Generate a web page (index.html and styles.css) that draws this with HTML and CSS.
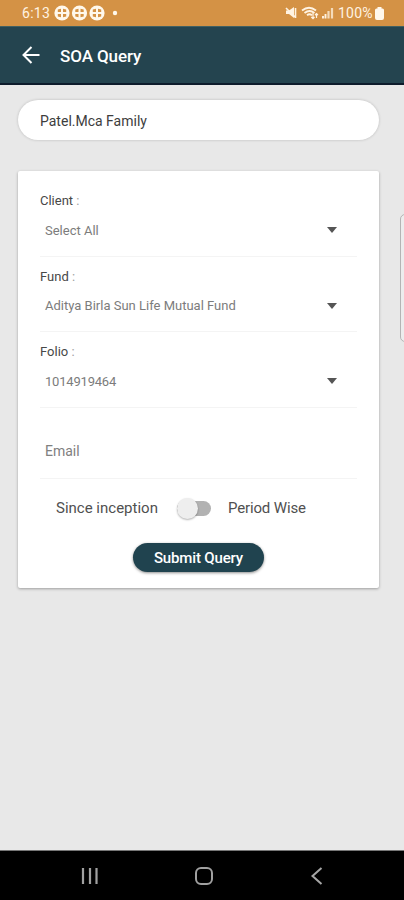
FILE: index.html
```
<!DOCTYPE html>
<html lang="en">
<head>
  <meta charset="UTF-8" />
  <meta name="viewport" content="width=device-width, initial-scale=1.0"/>
  <title>SOA Query</title>
  <link rel="stylesheet" href="styles.css">
</head>
<body>
  <div class="status-bar">
    <span class="time">6:13</span>
    <svg class="notifications" width="66" height="16" viewBox="0 0 66 16">
      <defs>
        <g id="ball">
          <circle cx="8" cy="8" r="7.6" fill="#fff8ec"/>
          <path d="M3.800 4.500L7 3.800V7H3.800zM9 3.800l3.200.7V7H9zM3.800 9H7v3.200l-3.200-.7zM9 9h3.200v2.500L9 12.200z" fill="#d49245"/>
        </g>
      </defs>
      <use href="#ball" x="0"/>
      <use href="#ball" x="17.5"/>
      <use href="#ball" x="35"/>
      <circle cx="61" cy="8" r="2.2" fill="#fff8ec"/>
    </svg>
    <svg class="signals" width="50" height="14" viewBox="0 0 50 14" fill="none" stroke="#fff3e2">
      <!-- muted speaker -->
      <path d="M1 4.500h3l5-3.500v11l-5-4H1z" fill="#fff3e2" stroke="none"/>
      <path d="M1 2l9.500 9.500M10.500 2v10" stroke-width="1.6"/>
      <!-- wifi -->
      <path d="M17 4.500q7-5.500 14 0M19.500 7q5-4 10 0M22 9.300q2.500-2 5 0" stroke-width="1.8"/>
      <path d="M28 7v5.500M26.300 11l1.700 1.700l1.500-1.700M31.500 12V7.500M30 9l1.500-1.500L33 9" stroke-width="1.2"/>
      <!-- mobile signal -->
      <path d="M38 12.500v-2.500M40.500 12.500V8" stroke-width="1.9"/>
      <path d="M43.500 12.500V5M47 12.500V2" stroke-width="2.2" opacity=".75"/>
    </svg>
    <span class="percent">100%</span>
    <svg width="9" height="13" viewBox="0 0 9 13">
      <path d="M2.500 0h4v1.500h1q1.500 0 1.500 1.500v8q0 2-2 2H2q-2 0-2-2V3q0-1.500 1.500-1.500h1z" fill="#fff8ec"/>
    </svg>
  </div>

  <div class="app-bar">
    <svg width="18" height="18" viewBox="0 0 18 18" fill="none" stroke="#fff" stroke-width="2">
      <path d="M17.500 9H2M9.500 1L1.500 9l8 8"/>
    </svg>
    <h1>SOA Query</h1>
  </div>

  <div class="content">
    <div class="family">Patel.Mca Family</div>

    <div class="card">
      <div class="field">
        <label>Client<span> :</span></label>
        <div class="select"><span>Select All</span><i class="caret"></i></div>
      </div>
      <div class="field">
        <label>Fund<span> :</span></label>
        <div class="select"><span>Aditya Birla Sun Life Mutual Fund</span><i class="caret"></i></div>
      </div>
      <div class="field">
        <label>Folio<span> :</span></label>
        <div class="select"><span class="folio-value">1014919464</span><i class="caret"></i></div>
      </div>
      <div class="email">Email</div>

      <div class="period">
        <span class="since">Since inception</span>
        <div class="switch"><div class="knob"></div></div>
        <span class="wise">Period Wise</span>
      </div>

      <button class="submit">Submit Query</button>
    </div>
  </div>

  <div class="edge-handle"></div>

  <div class="nav-bar">
    <svg width="18" height="18" viewBox="0 0 18 18" stroke="#a0a0a0" stroke-width="2.2">
      <path d="M2 1v16M9 1v16M15.500 1v16"/>
    </svg>
    <svg width="18" height="18" viewBox="0 0 18 18" fill="none" stroke="#a0a0a0" stroke-width="2">
      <rect x="1" y="1" width="16" height="16" rx="5"/>
    </svg>
    <svg width="18" height="18" viewBox="0 0 18 18" fill="none" stroke="#a6a6a6" stroke-width="2">
      <path d="M13.500 1L4.500 9l9 8"/>
    </svg>
  </div>
</body>
</html>
```
FILE: styles.css
```
* {
  box-sizing: border-box;
}

body {
  margin: 0;
  height: 900px;
  display: flex;
  flex-direction: column;
  position: relative;
  overflow: hidden;
  background-color: #e8e8e8;
  font-family: Roboto, Arial, sans-serif;
}

.status-bar {
  height: 26px;
  display: flex;
  align-items: center;
  padding: 0 20px 0 22px;
  background-color: #d49245;
  color: #fff3e2;
  font-size: 14px;
}

.time {
  width: 32px;
  letter-spacing: 0.3px;
}

.signals {
  margin-left: auto;
  margin-right: 3px;
}

.percent {
  width: 37px;
  letter-spacing: 0.2px;
}

.app-bar {
  height: 59px;
  display: flex;
  align-items: center;
  gap: 20px;
  padding: 0 22px;
  background-color: #24444f;
  border-top: 1px solid #416061;
  border-bottom: 2px solid #0d1b2b;
}

.app-bar h1 {
  margin: 0;
  padding-top: 1px;
  color: #fff;
  font-size: 17px;
  font-weight: 500;
  letter-spacing: -0.1px;
}

.content {
  flex: 1;
  padding: 15px 25px 0 18px;
}

.family {
  height: 40px;
  line-height: 42px;
  padding-left: 22px;
  border-radius: 20px;
  background-color: #fff;
  box-shadow: 0 0 3px rgba(0, 0, 0, 0.2);
  color: #3d3d3d;
  font-size: 14px;
}

.card {
  height: 417px;
  margin-top: 31px;
  padding: 10px 22px 0;
  border-radius: 2px;
  background-color: #fff;
  box-shadow: 0 1px 3px rgba(0, 0, 0, 0.32);
}

.field {
  height: 75.5px;
  padding-top: 10px;
  border-bottom: 1px solid #f4f4f4;
}

.field label {
  display: block;
  height: 20px;
  line-height: 20px;
  color: #484848;
  font-size: 13px;
}

.field label span {
  color: #a0a0a0;
}

.select {
  height: 38px;
  display: flex;
  align-items: center;
  justify-content: space-between;
  padding: 0 20px 0 5px;
  color: #7c7c7c;
  font-size: 13px;
}

.folio-value {
  letter-spacing: -0.2px;
}

.caret {
  border-left: 5px solid transparent;
  border-right: 5px solid transparent;
  border-top: 6px solid #555;
}

.email {
  height: 71px;
  padding: 34px 5px 0;
  line-height: 19px;
  border-bottom: 1px solid #f4f4f4;
  color: #808080;
  font-size: 14px;
}

.period {
  height: 59px;
  display: flex;
  align-items: center;
  padding-left: 16px;
  color: #505050;
  font-size: 15px;
}

.since {
  width: 121px;
}

.wise {
  letter-spacing: -0.15px;
}

.switch {
  width: 34px;
  height: 15px;
  margin-right: 17px;
  border-radius: 8px;
  background-color: #b2b2b2;
}

.knob {
  width: 21px;
  height: 21px;
  margin-top: -3px;
  border-radius: 50%;
  background-color: #eee;
  box-shadow: 0 1px 2px rgba(0, 0, 0, 0.3);
}

.submit {
  display: block;
  width: 131px;
  height: 29px;
  margin: 5px 0 0 93px;
  padding: 1px 0 0;
  border: none;
  border-radius: 15px;
  background-color: #20434f;
  box-shadow: 0 1px 3px rgba(0, 0, 0, 0.45);
  color: #fff;
  font-family: inherit;
  font-size: 15px;
  font-weight: 500;
  letter-spacing: -0.15px;
}

/* system side panel peeking in from the right */
.edge-handle {
  position: absolute;
  top: 214px;
  right: -6px;
  width: 10px;
  height: 128px;
  border: 1px solid #b4b4b4;
  border-radius: 5px;
  background-color: #ededed;
}

.nav-bar {
  height: 50px;
  display: flex;
  justify-content: space-between;
  align-items: center;
  padding: 0 78px 0 81px;
  border-top: 1px solid #777;
  background-color: #000;
}
```
